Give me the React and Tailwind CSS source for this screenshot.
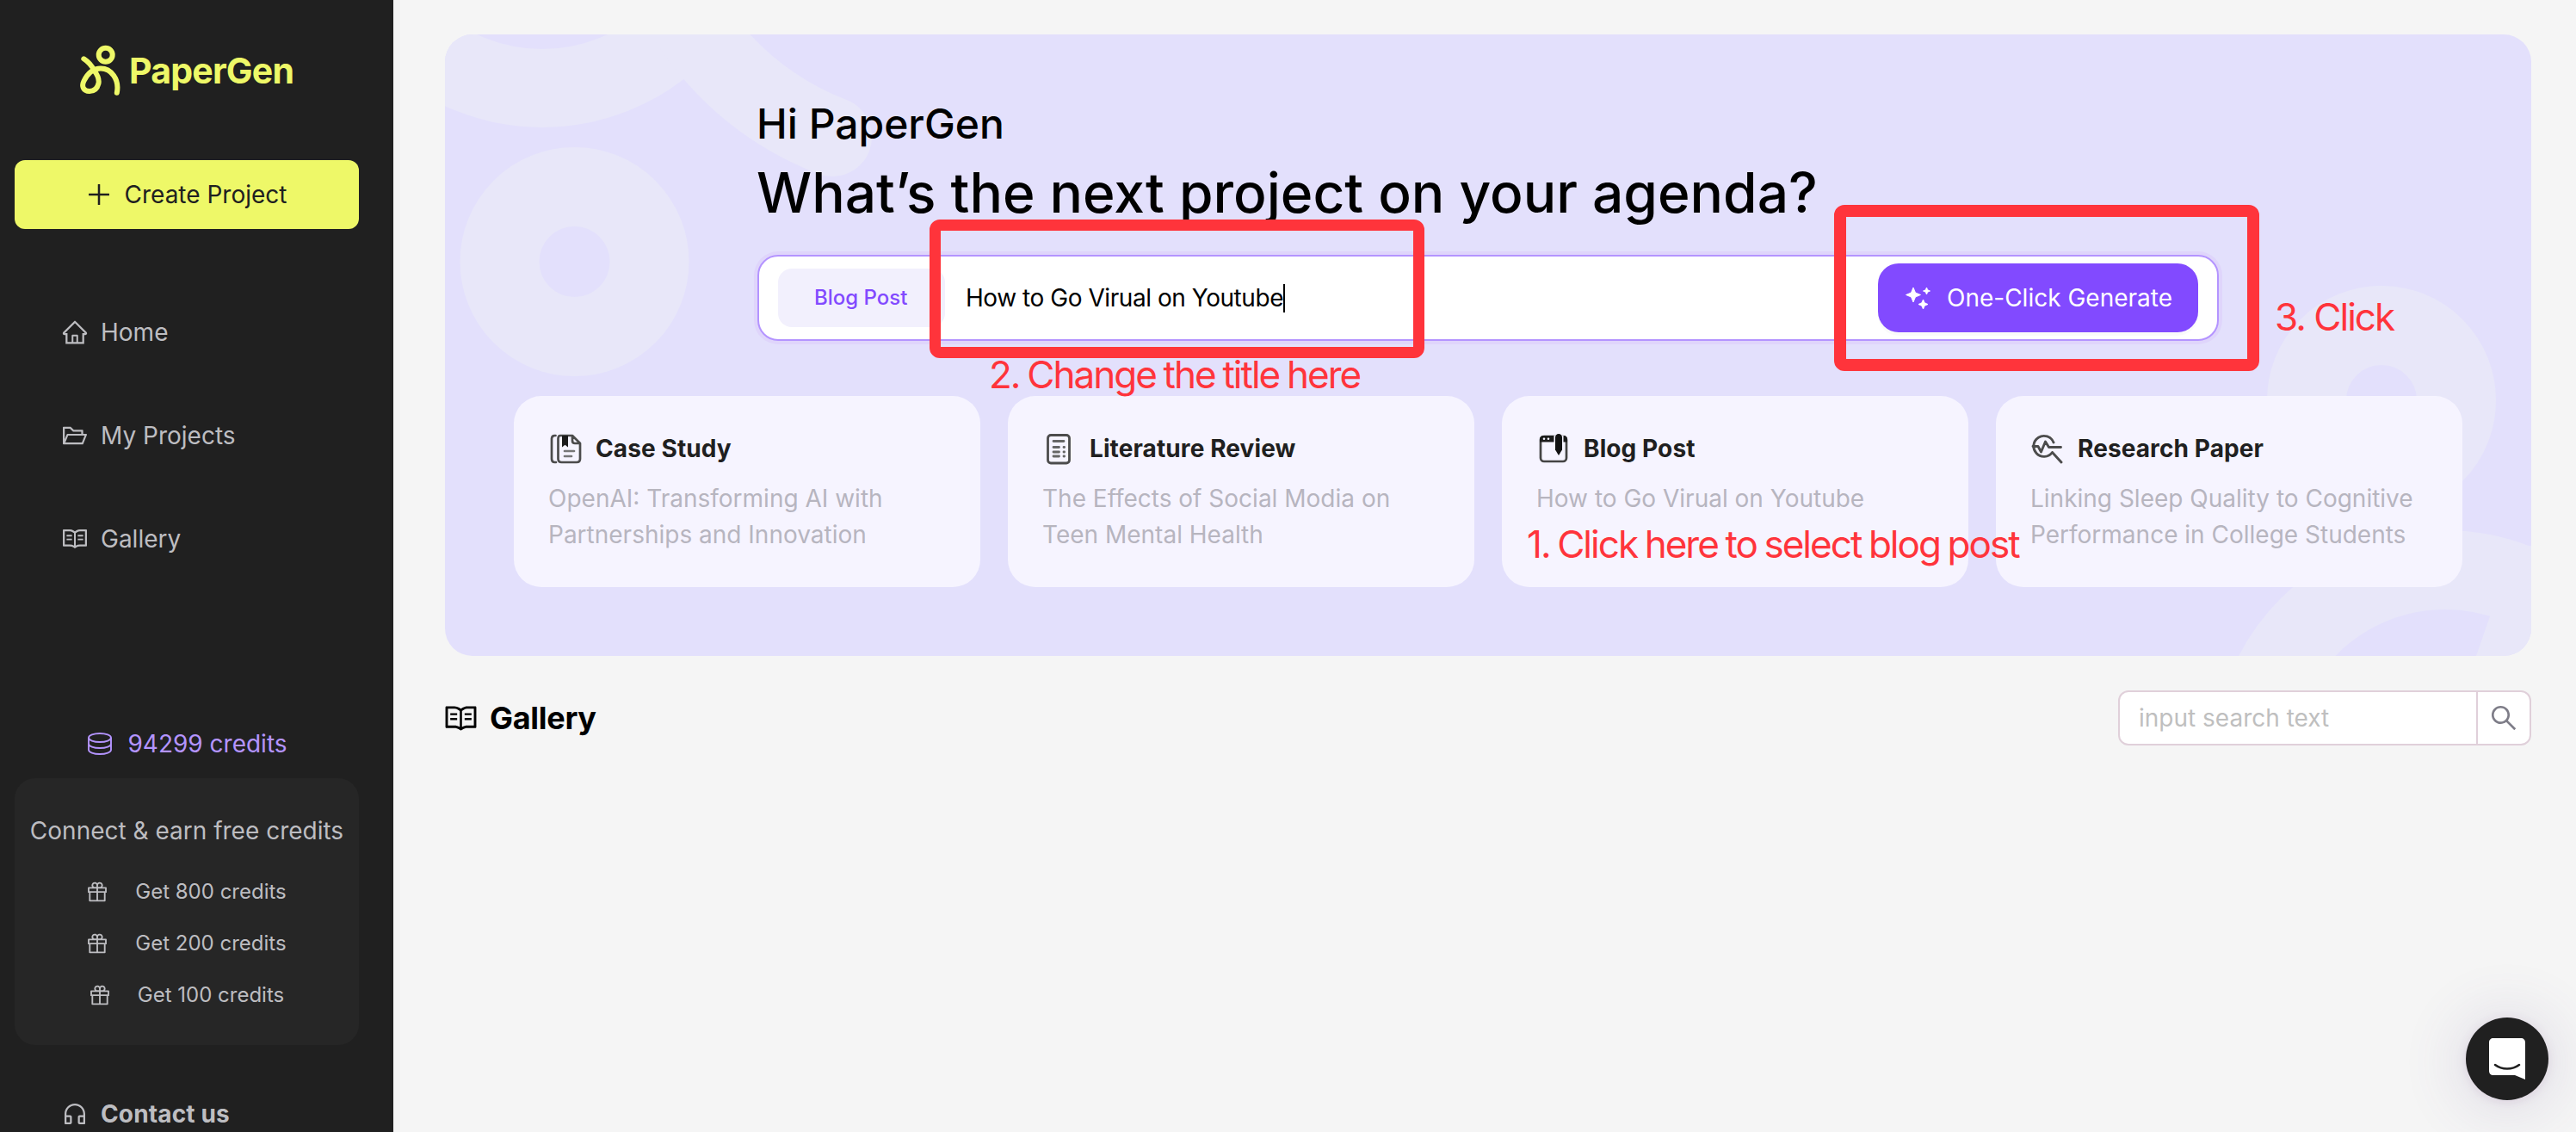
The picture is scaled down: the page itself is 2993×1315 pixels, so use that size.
import { AiOutlineHome, AiOutlineFolderOpen, AiOutlineRead, AiOutlinePlus, AiOutlineGift, AiOutlineSearch, AiOutlineCustomerService } from "react-icons/ai";

const font = "font-['Inter',sans-serif]";

function Logo() {
  return (
    <svg width="48" height="60" viewBox="0 0 48 60" fill="none" stroke="#eef868" strokeWidth="6" strokeLinecap="round">
      <circle cx="29.7" cy="11.7" r="8" />
      <path d="M4.3 16.3C10 20 14 25 16.500 30C21 36 22.500 40 21.500 45C20 51 16 54 11 54C3.500 54 1.500 48 4.500 42C9 33 15 27.500 24 27.500C36 27.500 46 40 42.800 55.800" />
    </svg>
  );
}

function CreditsIcon() {
  return (
    <svg width="28" height="26" viewBox="0 0 28 26" fill="none" stroke="#b494ff" strokeWidth="1.9">
      <ellipse cx="14" cy="6" rx="13" ry="5" />
      <path d="M1 6v14c0 2.800 5.800 5 13 5s13-2.200 13-5V6M1 13c0 2.800 5.800 5 13 5s13-2.200 13-5" />
    </svg>
  );
}

function CaseIcon() {
  return (
    <svg width="40" height="40" viewBox="0 0 40 40" fill="none" stroke="#4c4c4c" strokeWidth="2.700" strokeLinecap="round" strokeLinejoin="round">
      <path d="M8.500 5H7.500C5 5 4 6.500 4 9v23c0 2.500 1 4 3.500 4H9M14 5h14l9 9v18c0 2.500-1.500 4-4 4H15.500c-2.500 0-4-1.500-4-4V9c0-2.500 .8-4 2.500-4zM28 5v6c0 2 1 3 3 3h6" />
      <path d="M16 5h7v13.500l-3.500-2.800-3.500 2.800z" fill="#1c1c1c" stroke="none" />
      <path d="M19 23h11M19 29h8" stroke="#777" />
    </svg>
  );
}

function LiteratureIcon() {
  return (
    <svg width="40" height="40" viewBox="0 0 40 40" fill="none" stroke="#666" strokeWidth="2.800" strokeLinecap="round">
      <rect x="6.500" y="4.500" width="25" height="32.500" rx="3.500" stroke="#4c4c4c" />
      <path d="M13 11.500h12M13 18.500h6.500M13 24h6.500M13 29h6.500M25 18.500h.6M25 24h.6M25 29h.6" />
    </svg>
  );
}

function BlogIcon() {
  return (
    <svg width="40" height="40" viewBox="0 0 40 40" fill="none">
      <rect x="5" y="6" width="30" height="29" rx="4" stroke="#444" strokeWidth="2.700" />
      <path d="M4 12.500V9c0-2 1.500-4 4-4h24c2.500 0 4 2 4 4v3.500z" fill="#1c1c1c" />
      <circle cx="9" cy="8.800" r="1.300" fill="#f5f3ff" />
      <circle cx="14" cy="8.800" r="1.300" fill="#f5f3ff" />
      <path d="M20.500 5h11v18l-5.500 5-5.500-5z" fill="#f5f3ff" />
      <path d="M22 7c0-2 1.700-4 4-4s4 2 4 4v14.500l-4 6.500-4-6.500z" fill="#111" />
    </svg>
  );
}

function ResearchIcon() {
  return (
    <svg width="40" height="40" viewBox="0 0 40 40" fill="none" stroke="#4c4c4c" strokeWidth="2.900" strokeLinecap="round" strokeLinejoin="round">
      <path d="M27 13A12 12 0 1 0 25.500 24.500M25.500 24.500L36 36" />
      <path d="M3 17.500h6l3.500 6.500 5-12 4 6.500h14" />
    </svg>
  );
}

function Sparkles() {
  return (
    <svg width="30" height="28" viewBox="0 0 30 28" fill="#fff" stroke="#fff" strokeWidth="0.9" strokeLinejoin="round">
      <path d="M9 2l2.500 6L17.500 10.500l-6 2.500L9 19l-2.500-6L.5 10.500l6-2.500z" />
      <path d="M24.500 2l1.200 2.800L28.500 6l-2.800 1.200L24.500 10l-1.200-2.800L20.500 6l2.800-1.200z" />
      <path d="M20.500 16l1.700 3.800L26 21.500l-3.800 1.700L20.500 27l-1.700-3.800L15 21.500l3.800-1.700z" />
    </svg>
  );
}

function HeroPattern() {
  return (
    <svg className="absolute inset-0" width="2424" height="722" viewBox="517 40 2424 722" fill="none" stroke="#e8e7f9">
      <circle cx="667.500" cy="304" r="87" strokeWidth="92" />
      <circle cx="630" cy="-121" r="223.500" strokeWidth="91" />
      <path d="M780 -10Q846 112 967 159" strokeWidth="92" strokeLinecap="round" />
      <circle cx="2767" cy="465" r="87" strokeWidth="92" />
      <circle cx="2841" cy="886" r="224" strokeWidth="92" />
      <path d="M2893 716L2877 762H2941V634L2893 640z" fill="#e8e7f9" stroke="none" />
    </svg>
  );
}

const nav = [
  { label: "Home", Icon: AiOutlineHome },
  { label: "My Projects", Icon: AiOutlineFolderOpen },
  { label: "Gallery", Icon: AiOutlineRead },
];

const cards = [
  { title: "Case Study", Icon: CaseIcon, lines: ["OpenAI: Transforming AI with", "Partnerships and Innovation"] },
  { title: "Literature Review", Icon: LiteratureIcon, lines: ["The Effects of Social Modia on", "Teen Mental Health"] },
  { title: "Blog Post", Icon: BlogIcon, lines: ["How to Go Virual on Youtube"] },
  { title: "Research Paper", Icon: ResearchIcon, lines: ["Linking Sleep Quality to Cognitive", "Performance in College Students"] },
];

function Sidebar() {
  return (
    <aside className="flex h-full w-[457px] shrink-0 flex-col bg-[#202020] text-[28px] text-[#bdbdc1]">
      <div className="mt-[52px] flex h-[60px] items-center gap-[9px] pl-[93px] text-[#eef868]">
        <Logo />
        <span className="text-[41px] leading-none font-bold tracking-[-0.8px] whitespace-nowrap">PaperGen</span>
      </div>
      <button className="mt-[74px] ml-[17px] flex h-20 w-[400px] items-center justify-center gap-4 rounded-xl bg-[#eef868] text-[#202020]">
        <AiOutlinePlus size={34} className="-m-[3px]" />
        <span>Create Project</span>
      </button>
      <nav className="mt-[60px] flex flex-col">
        {nav.map(({ label, Icon }) => (
          <a key={label} className="flex h-[120px] items-center gap-[14px] pl-[71px]">
            <Icon size={32} />
            <span>{label}</span>
          </a>
        ))}
      </nav>
      <div className="mt-[156px] flex h-[44px] w-[436px] shrink-0 items-center justify-center gap-[18px] text-[#b494ff]">
        <CreditsIcon />
        <span>94299 credits</span>
      </div>
      <div className="mt-[18px] ml-[17px] flex h-[310px] w-[400px] shrink-0 flex-col items-center rounded-3xl bg-[#262626] pt-[40px]">
        <p className="h-[42px] leading-[42px] whitespace-nowrap">Connect &amp; earn free credits</p>
        <div className="mt-[20px] flex flex-col items-center text-2xl">
          {[800, 200, 100].map((n) => (
            <div key={n} className="flex h-[60px] items-center gap-[30px]">
              <AiOutlineGift size={28} className="-ml-0.5" />
              <span>Get {n} credits</span>
            </div>
          ))}
        </div>
      </div>
      <div className="mt-[60px] flex h-10 shrink-0 items-center gap-[14px] pl-[71px] font-bold">
        <AiOutlineCustomerService size={32} />
        <span className="tracking-[0.15px]">Contact us</span>
      </div>
    </aside>
  );
}

export default function App() {
  return (
    <div className={`relative flex h-[1315px] w-[2993px] overflow-hidden bg-[#f5f5f5] ${font}`}>
      <Sidebar />
      <main className="flex flex-1 flex-col pt-10 pr-[52px] pl-[60px]">
        <section className="relative h-[722px] overflow-hidden rounded-[32px] bg-[#e3e0fc]">
          <HeroPattern />
          <div className="relative flex flex-col pt-[72px]">
            <h2 className="ml-[362px] h-[64px] text-5xl leading-[64px] font-medium text-black">Hi PaperGen</h2>
            <h1 className="ml-[362px] h-[96px] text-[64px] leading-[96px] font-medium whitespace-nowrap text-black">What’s the next project on your agenda?</h1>
            <div className="mt-[24px] ml-[363px] flex h-[100px] w-[1698px] items-center rounded-3xl border-2 border-[#b494ff] bg-white pr-[22px] pl-[22px] shadow-[0_0_0_4px_#dfd5fb]">
              <div className="flex h-[68px] w-[194px] items-center rounded-2xl bg-[#f2f0fd] pl-[42px] text-2xl font-medium text-[#824aff]">Blog Post</div>
              <div className="ml-[24px] flex items-center text-[28px] tracking-[-0.45px] whitespace-nowrap text-black">
                How to Go Virual on Youtube
                <span className="h-[33px] w-0.5 bg-black" />
              </div>
              <button className="ml-auto flex h-20 w-[372px] items-center rounded-3xl bg-[#824aff] pl-8 text-[28px] whitespace-nowrap text-white shadow-[0_4px_0_rgba(0,0,0,0.02)]">
                <Sparkles />
                <span className="ml-[18px]">One-Click Generate</span>
              </button>
            </div>
            <div className="mt-16 grid grid-cols-4 gap-8 px-20">
              {cards.map(({ title, Icon, lines }) => (
                <article key={title} className="h-[222px] rounded-[32px] bg-[#f6f4ff] px-10 pt-10">
                  <div className="flex h-[42px] items-center gap-[15px] text-[28px] font-bold tracking-[0.1px] text-[#202020]">
                    <Icon />
                    <span>{title}</span>
                  </div>
                  <div className="mt-[16px] text-[28px] leading-[42px] whitespace-nowrap text-[#b7b5bf]">
                    {lines.map((l) => (
                      <p key={l}>{l}</p>
                    ))}
                  </div>
                </article>
              ))}
            </div>
          </div>
        </section>
        <div className="mt-10 flex h-16 items-center justify-between">
          <div className="flex items-center gap-4 text-4xl font-bold tracking-[-0.3px] text-black">
            <AiOutlineRead size={41} className="-mr-[3px] -ml-[2px]" />
            <span>Gallery</span>
          </div>
          <div className="flex h-16 w-[480px] items-stretch overflow-hidden rounded-xl border-2 border-[#e0d0da] bg-white">
            <div className="flex flex-1 items-center pl-[22px] text-[28px] text-[#bfbfbf]">input search text</div>
            <div className="flex w-[62px] items-center justify-center border-l-2 border-[#e0d0da] text-[#7e7d88]">
              <AiOutlineSearch size={36} />
            </div>
          </div>
        </div>
      </main>

      <div className="absolute top-[255px] left-[1080px] h-[161px] w-[575px] rounded-xl border-[13.5px] border-[#ff343b]" />
      <div className="absolute top-[238px] left-[2131px] h-[193px] w-[494px] rounded-xl border-[14px] border-[#ff343b]" />
      <p className="absolute top-[407px] left-[1149px] text-[44px] leading-[56px] tracking-[-0.045em] whitespace-nowrap text-[#ff343b] [word-spacing:-1.7px]">2. Change the title here</p>
      <p className="absolute top-[340px] left-[2643px] text-[44px] leading-[56px] tracking-[-0.045em] whitespace-nowrap text-[#ff343b]">3. Click</p>
      <p className="absolute top-[604px] left-[1774px] text-[44px] leading-[56px] tracking-[-0.045em] whitespace-nowrap text-[#ff343b] [word-spacing:-1.8px]">1. Click here to select blog post</p>

      <div className="absolute top-[1182px] left-[2865px] flex h-24 w-24 items-center justify-center rounded-full bg-[#202020] shadow-[0_2px_12px_rgba(120,60,120,0.12),0_4px_64px_16px_rgba(90,70,140,0.11)]">
        <svg width="42" height="48" viewBox="0 0 42 48">
          <path d="M5 0h32c3 0 5 2 5 5v43l-12-5H5c-3 0-5-2-5-5V5c0-3 2-5 5-5z" fill="#fff" />
          <path d="M7 31c8 6 20 6 28 0" fill="none" stroke="#202020" strokeWidth="2.600" strokeLinecap="round" />
        </svg>
      </div>
    </div>
  );
}
